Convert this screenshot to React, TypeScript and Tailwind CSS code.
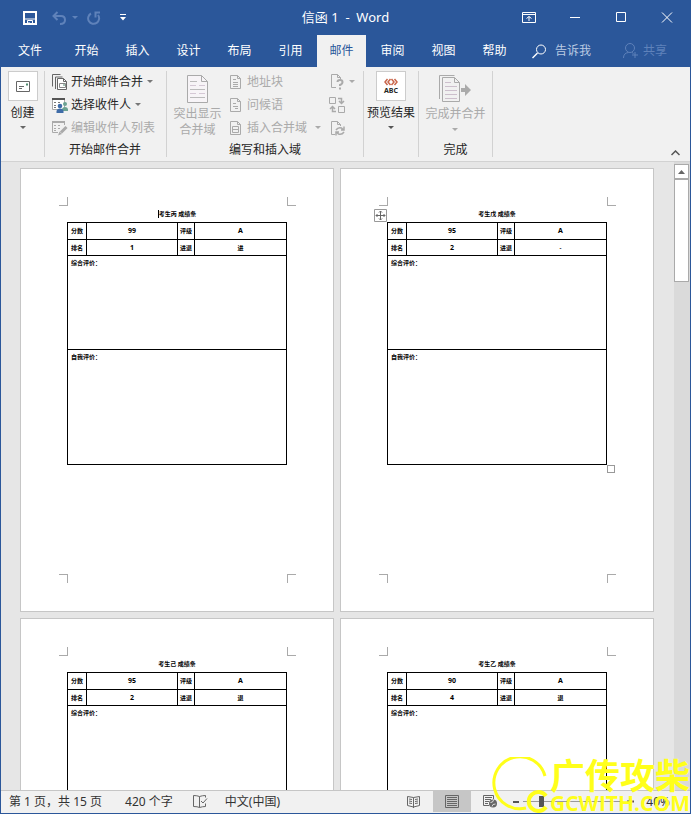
import { ReactNode } from "react";

type Slip = {
  name: string;
  score: string;
  rank: string;
  grade: string;
  trend: string;
  cursor?: boolean;
  handles?: boolean;
};

const slips: Slip[] = [
  { name: "考生丙", score: "99", rank: "1", grade: "A", trend: "进", cursor: true },
  { name: "考生戊", score: "95", rank: "2", grade: "A", trend: "-", handles: true },
  { name: "考生己", score: "95", rank: "2", grade: "A", trend: "退" },
  { name: "考生乙", score: "90", rank: "4", grade: "A", trend: "退" },
];

const tabs = ["开始", "插入", "设计", "布局", "引用", "邮件", "审阅", "视图", "帮助"];

const Caret = ({ className = "" }: { className?: string }) => (
  <svg width="6" height="3" viewBox="0 0 6 3" className={className} fill="currentColor">
    <path d="M0 0h6L3 3z" />
  </svg>
);

// Sheet of paper with a folded corner, shared by the small ribbon icons.
const Doc = ({ children }: { children?: ReactNode }) => (
  <svg width="15" height="16" viewBox="0 0 15 16" fill="none" stroke="currentColor">
    <path d="M1.500 1.500h7l3 3v10h-10z" />
    <path d="M8.500 1.500v3h3" />
    {children}
  </svg>
);

const MergeIcon = () => (
  <svg width="16" height="16" viewBox="0 0 16 16" fill="none" stroke="#666">
    <path d="M.5 12.500V.5h8M3.500 15V3h7" />
    <path d="M5.500 15.500v-11h6l3 3v8z" fill="#fff" />
    <path d="M11.500 4.500v3h3" />
    <path d="M7.500 9.500h6v4h-6z" fill="#fff" stroke="#888" />
    <path d="M11 11h2" stroke="#4f8a6e" />
  </svg>
);

const RecipientsIcon = () => (
  <svg width="16" height="16" viewBox="0 0 16 16" fill="none">
    <path d="M.5 1.500h12v11H.5z" fill="#fff" stroke="#aaa" />
    <path d="M0 2h13" stroke="#555" strokeWidth="2" />
    <path d="M2 5.500h2M6 5.500h2M2 8.500h2M2 10.500h2" stroke="#777" />
    <circle cx="13" cy="7" r="2" fill="#6ba292" />
    <path d="M10 14v-2q.5-2 3-2t3 2v2z" fill="#6ba292" />
    <circle cx="8" cy="9" r="2.300" fill="#3f6ca8" />
    <path d="M4.500 16v-2q.5-2.500 3.500-2.500t3.500 2.500v2z" fill="#3f6ca8" />
  </svg>
);

const EditListIcon = () => (
  <svg width="16" height="16" viewBox="0 0 16 16" fill="none" stroke="#aaa">
    <path d="M6 12.500H.5v-11h12V5" />
    <path d="M0 2h13" strokeWidth="2" />
    <path d="M2 5.500h2M6 5.500h2M2 8.500h2M6 8.500h2M2 10.500h2" />
    <path d="M14.500 7l-5.500 5.500" strokeWidth="3" />
    <path d="M7.500 11.500L6 15.500l4-1.500z" fill="#aaa" stroke="none" />
  </svg>
);

const HighlightIcon = () => (
  <svg width="22" height="28" viewBox="0 0 22 28" fill="none" stroke="#aaa">
    <path d="M.5.5h14l6 6v21H.5z" fill="#f7f4f7" />
    <path d="M14.500.5v6h6" />
    <path d="M3 6.500h7M3 14.500h15M3 22.500h15" stroke="#bbb" />
    <path d="M3 10.500h6M12 10.500h6M3 18.500h6M12 18.500h6" stroke="#d5c8d5" />
  </svg>
);

const FinishIcon = () => (
  <svg width="32" height="28" viewBox="0 0 32 28" fill="none" stroke="#aaa">
    <path d="M.5 24V.5h15M3.500 2.500h12l5 5v19h-17z" />
    <path d="M15.500 2.500v5h5" />
    <path d="M6 7.500h6M6 11.500h12M6 15.500h12M6 19.500h12M6 23.500h12" stroke="#ccbfcc" />
    <path d="M22 13h4V9l6 6-6 6v-4h-4z" fill="#aaa" stroke="none" />
  </svg>
);

const SmallButton = ({ icon, label, caret, off }: { icon: ReactNode; label: string; caret?: boolean; off?: boolean }) => (
  <button className={`flex h-[23px] items-center gap-[3px] whitespace-nowrap ${off ? "text-[#aaa]" : "text-[#262626]"}`}>
    {icon}
    <span>{label}</span>
    {caret && <Caret className="ml-px text-[#777]" />}
  </button>
);

const Divider = () => <div className="my-1 w-px shrink-0 bg-[#d2d2d2]" />;

const WindowButton = ({ label, children }: { label: string; children: ReactNode }) => (
  <button aria-label={label} className="flex h-full w-[46px] items-center justify-center">
    <svg width="14" height="11" viewBox="0 0 14 11" fill="none" stroke="#fff">
      {children}
    </svg>
  </button>
);

const TitleBar = () => (
  <header className="relative flex h-[34px] shrink-0 items-center justify-between text-white">
    <div className="flex items-center pl-[22px] pt-px">
      <button aria-label="保存">
        <svg width="14" height="14" viewBox="0 0 14 14" fill="none" stroke="#fff" strokeWidth="2">
          <path d="M1 1h12v12H1z" />
          <path d="M1 8h12" strokeWidth="1" />
          <path d="M4.500 13v-3.500h5V13" strokeWidth="1" />
          <path d="M6 11v3" strokeWidth="1" />
        </svg>
      </button>
      <button aria-label="撤消" className="ml-[15px] flex items-center gap-[6px] text-[#5f82ba]">
        <svg width="14" height="14" viewBox="0 0 14 14" fill="none" stroke="currentColor" strokeWidth="2">
          <path d="M5.500 1L1.500 5l4 4M2 5h7q4 0 4 4t-5 4" />
        </svg>
        <Caret />
      </button>
      <button aria-label="重复" className="ml-[9px] text-[#5f82ba]">
        <svg width="14" height="14" viewBox="0 0 14 14" fill="none" stroke="currentColor" strokeWidth="2">
          <path d="M4 2.500a5.500 5.500 0 1 0 7 1.500M13 1.500H8.500v5" />
        </svg>
      </button>
      <button aria-label="自定义" className="ml-[19px]">
        <svg width="6" height="7" viewBox="0 0 6 7" fill="#fff">
          <path d="M0 0h6v1H0zM0 3h6L3 6.500z" />
        </svg>
      </button>
    </div>
    <h1 className="absolute left-1/2 -translate-x-1/2 whitespace-pre text-[13px]">信函 1  -  Word</h1>
    <div className="flex h-full items-center">
      <WindowButton label="功能区显示选项">
        <path d="M.5.5h13v10H.5zM0 2.500h14M7 9V4.500M4.500 6.500L7 4.500l2.500 2" />
      </WindowButton>
      <WindowButton label="最小化">
        <path d="M2 5.500h10" />
      </WindowButton>
      <WindowButton label="最大化">
        <path d="M2.500.5h9v9h-9z" />
      </WindowButton>
      <WindowButton label="关闭">
        <path d="M2 .5l10 10M12 .5L2 10.500" />
      </WindowButton>
    </div>
  </header>
);

const TabBar = () => (
  <nav className="flex h-[33px] shrink-0 items-stretch pt-px text-white">
    <button className="mr-[2px] w-[58px]">文件</button>
    {tabs.map((tab) => (
      <button key={tab} className={tab === "邮件" ? "mx-px w-[49px] bg-[#f1f1f1] text-[#2b579a]" : "w-[51px]"}>
        {tab}
      </button>
    ))}
    <button className="ml-3 flex items-center gap-2 text-[#bccbe3]">
      <svg width="15" height="15" viewBox="0 0 15 15" fill="none" stroke="#fff">
        <circle cx="9" cy="5.500" r="4.500" />
        <path d="M5.500 9L.5 14" strokeWidth="1.500" />
      </svg>
      告诉我
    </button>
    <button className="ml-auto mr-[23px] flex items-center gap-1 text-[#5f82ba]">
      <svg width="16" height="16" viewBox="0 0 16 16" fill="none" stroke="currentColor">
        <circle cx="7" cy="5" r="4.500" />
        <path d="M.5 15q0-5 5-5.500M9 9.500l1.500 1M12 9v6M9 12h6" />
      </svg>
      共享
    </button>
  </nav>
);

const Ribbon = () => (
  <section className="flex h-[95px] shrink-0 border-b border-[#d2d2d2] bg-[#f1f1f1] text-[#262626]">
    <button className="flex w-[43px] flex-col items-center pt-1">
      <span className="flex h-[30px] w-[30px] items-center justify-center border border-[#ccc] bg-white">
        <svg width="14" height="11" viewBox="0 0 14 11" fill="none" stroke="#666">
          <path d="M.5.5h13v10H.5zM3 5.500h5M3 7.500h3" />
          <path d="M10 3.500h2" stroke="#4f8a6e" strokeWidth="2" />
        </svg>
      </span>
      <span className="mt-[3px]">创建</span>
      <Caret className="mt-1 text-[#666]" />
    </button>
    <Divider />
    <div className="flex w-[121px] flex-col pl-[7px] pt-[3px]">
      <SmallButton icon={<MergeIcon />} label="开始邮件合并" caret />
      <SmallButton icon={<RecipientsIcon />} label="选择收件人" caret />
      <SmallButton icon={<EditListIcon />} label="编辑收件人列表" off />
      <p className="mr-2 mt-[2px] text-center">开始邮件合并</p>
    </div>
    <Divider />
    <div className="flex w-[196px] flex-col">
      <div className="flex h-[74px]">
        <button className="flex w-[61px] flex-col items-center pt-2 leading-4 text-[#aaa]">
          <HighlightIcon />
          <span className="mt-[3px]">突出显示<br />合并域</span>
        </button>
        <div className="flex flex-col pl-px pt-[3px]">
          <SmallButton icon={<Doc><path d="M4 5.500h3M4 8.500h5M4 10.500h5M4 12.500h5" /></Doc>} label="地址块" off />
          <SmallButton icon={<Doc><path d="M4 6.500h3M4 9.500h5M6 11.500h3" /></Doc>} label="问候语" off />
          <div className="flex items-center gap-2 text-[#aaa]">
            <SmallButton icon={<Doc><path d="M3.500 6.500h6v6h-6zM3.500 9.500h6" /></Doc>} label="插入合并域" off />
            <Caret />
          </div>
        </div>
        <div className="flex flex-col pl-2 pt-[3px] text-[#aaa]">
          <button aria-label="规则" className="flex h-[23px] items-center gap-1">
            <svg width="16" height="17" viewBox="0 0 16 17" fill="none" stroke="currentColor">
              <path d="M7 14.500H2.500v-13h6l3 3V6M8.500 1.500v3h3" />
              <path d="M8.500 9q0-2 2.500-2t2.500 2-2.500 3v1M11 14.500v2" strokeWidth="2" />
            </svg>
            <Caret />
          </button>
          <button aria-label="匹配域" className="flex h-[23px] items-center">
            <svg width="16" height="16" viewBox="0 0 16 16" fill="none" stroke="currentColor">
              <path d="M.5.500h6v6h-6zM9.500 9.500h6v6h-6z" />
              <path d="M9 1.500h3.500V6M10 4l2.500 2.500L15 4M7 14.500H3.500V10M1 12l2.500-2.500L6 12" strokeWidth="1.500" />
            </svg>
          </button>
          <button aria-label="更新标签" className="flex h-[23px] items-center">
            <svg width="17" height="16" viewBox="0 0 17 16" fill="none" stroke="currentColor">
              <path d="M6 14.500H2.500v-13h6l3 3V6M8.500 1.500v3h3" />
              <path d="M7 10q2-3 5.500-2l1.500 1.500M15 6.500v3.500h-3M15 12q-2 3-5.500 2L8 12.500M7 15.500V12h3" strokeWidth="1.500" />
            </svg>
          </button>
        </div>
      </div>
      <p className="text-center">编写和插入域</p>
    </div>
    <Divider />
    <button className="flex w-[54px] flex-col items-center whitespace-nowrap pt-1">
      <span className="flex h-[30px] w-[30px] flex-col items-center justify-center border border-[#ccc] bg-white">
        <svg width="14" height="8" viewBox="0 0 14 8" fill="none" stroke="#c9674c" strokeWidth="1.500">
          <path d="M3.500 1l-2.500 3 2.500 3M6.500 1L4 4l2.500 3M7.500 1L10 4 7.500 7M10.500 1L13 4l-2.500 3" />
        </svg>
        <span className="text-[7px] font-bold leading-[9px]">ABC</span>
      </span>
      <span className="mt-[3px]">预览结果</span>
      <Caret className="mt-1 text-[#555]" />
    </button>
    <Divider />
    <div className="flex w-[73px] flex-col items-center">
      <button className="flex h-[74px] flex-col items-center whitespace-nowrap pt-2 text-[#aaa]">
        <FinishIcon />
        <span className="mt-[2px]">完成并合并</span>
        <Caret className="mt-[5px]" />
      </button>
      <p>完成</p>
    </div>
    <Divider />
    <button aria-label="折叠功能区" className="ml-auto mr-[10px] self-end pb-[5px]">
      <svg width="9" height="6" viewBox="0 0 9 6" fill="none" stroke="#555" strokeWidth="1.500">
        <path d="M.5 5l4-4 4 4" />
      </svg>
    </button>
  </section>
);

const CropMarks = ({ bottom }: { bottom?: boolean }) => (
  <div className="flex justify-between pl-[38px] pr-[37px]">
    <span className={`size-[9px] border-r border-[#aaa] ${bottom ? "border-t" : "border-b"}`} />
    <span className={`size-[9px] border-l border-[#aaa] ${bottom ? "border-t" : "border-b"}`} />
  </div>
);

const Page = ({ slip }: { slip: Slip }) => (
  <article className="flex h-[444px] w-[314px] flex-col border border-[#c6c6c6] bg-white pb-7 pt-7 text-[6px] font-bold leading-[8px] text-black">
    <CropMarks />
    <h2 className="mt-1 h-3 text-center">
      <span className={slip.cursor ? "border-l border-black" : ""}>{slip.name} 成绩条</span>
    </h2>
    <div className="relative mx-[46px]">
      {slip.handles && (
        <svg width="13" height="13" viewBox="0 0 13 13" fill="none" stroke="#666" className="absolute -left-[13px] -top-[13px]">
          <path d="M.5.5h12v12H.5z" fill="#fff" stroke="#999" />
          <path d="M6.500 2v9M2 6.500h9M5 3.500l1.500-1.500L8 3.500M5 9.500L6.500 11 8 9.500M3.500 5L2 6.500 3.500 8M9.500 5L11 6.500 9.500 8" />
        </svg>
      )}
      <table className="w-full table-fixed border-collapse border border-black text-center [&_td]:border [&_td]:border-black [&_td]:p-0 [&_th]:border [&_th]:border-black [&_th]:p-0">
        <colgroup>
          <col className="w-[19px]" />
          <col className="w-[91px]" />
          <col className="w-[17px]" />
          <col />
        </colgroup>
        <tbody>
          <tr className="h-[17px]">
            <th>分数</th>
            <td className="text-[7px]">{slip.score}</td>
            <th>评级</th>
            <td className="text-[7px]">{slip.grade}</td>
          </tr>
          <tr className="h-4">
            <th>排名</th>
            <td className="text-[7px]">{slip.rank}</td>
            <th>进退</th>
            <td>{slip.trend}</td>
          </tr>
          <tr className="h-[94px] text-left align-top">
            <td colSpan={4}><p className="pl-[3px] pt-[3px]">综合评价：</p></td>
          </tr>
          <tr className="h-[115px] text-left align-top">
            <td colSpan={4}><p className="pl-[3px] pt-[3px]">自我评价：</p></td>
          </tr>
        </tbody>
      </table>
      {slip.handles && <span className="absolute -bottom-2 -right-2 size-2 border border-[#999] bg-white" />}
    </div>
    <div className="mt-auto">
      <CropMarks bottom />
    </div>
  </article>
);

const ScrollBar = () => (
  <div className="flex w-4 shrink-0 flex-col bg-[#dadada] pr-px pt-[2px]">
    <button aria-label="向上滚动" className="flex h-[15px] shrink-0 items-center justify-center border border-[#aaa] bg-white">
      <svg width="7" height="4" viewBox="0 0 7 4" fill="#666">
        <path d="M0 4h7L3.500 0z" />
      </svg>
    </button>
    <div className="h-[103px] border border-[#aaa] bg-white" />
  </div>
);

const StatusBar = () => (
  <footer className="flex h-[23px] shrink-0 items-center border-t border-[#c6c6c6] bg-[#f1f1f1] pb-px pl-2 text-[#333]">
    <span className="whitespace-nowrap">第 1 页，共 15 页</span>
    <span className="ml-[23px] whitespace-nowrap">420 个字</span>
    <button aria-label="校对" className="ml-5">
      <svg width="15" height="13" viewBox="0 0 15 13" fill="none" stroke="#666">
        <path d="M6.500 1.500Q4 .5.500.500v11q4 0 6 1zM6.500 1.500q3-1 6-1v2M6.500 12.500q3-1 6-1v-3M8 6l2 2 4-4.500" />
      </svg>
    </button>
    <span className="ml-[17px] whitespace-nowrap">中文(中国)</span>
    <div className="ml-auto flex h-full items-center">
      <button aria-label="阅读视图" className="flex h-full w-[39px] items-center justify-center">
        <svg width="13" height="12" viewBox="0 0 13 12" fill="none" stroke="#666">
          <path d="M6.500 1.500L.5.500v9l6 1.500 6-1.500v-9zM6.500 1.500V12M2 3l3 .5M2 5l3 .5M2 7l3 .5M11 3l-3 .5M11 5l-3 .5M11 7l-3 .5" />
        </svg>
      </button>
      <button aria-label="页面视图" className="flex h-full w-[38px] items-center justify-center bg-[#c6c6c6]">
        <svg width="14" height="13" viewBox="0 0 14 13" fill="none" stroke="#666">
          <path d="M.5.5h13v12H.5zM2 2.500h10M2 4.500h10M2 6.500h10M2 8.500h10M2 10.500h10" />
        </svg>
      </button>
      <button aria-label="Web 版式视图" className="flex h-full w-[38px] items-center justify-center">
        <svg width="14" height="13" viewBox="0 0 14 13" fill="none" stroke="#666">
          <path d="M6 10.500H.5V.5h10V4M2 2.500h7M2 4.500h6M2 6.500h4M2 8.500h3" />
          <circle cx="10" cy="8.500" r="4" fill="#666" stroke="none" />
          <path d="M7.500 7.500l2-.5 1-2M9 11.500l1-2 2.500-.5" stroke="#ddd" />
        </svg>
      </button>
      <button aria-label="缩小" className="ml-1 h-[2px] w-[6px] bg-[#555]" />
      <input
        type="range"
        aria-label="显示比例"
        min="0"
        max="100"
        defaultValue="17"
        className="mx-1 h-[11px] w-[100px] appearance-none bg-[linear-gradient(#999,#999)] bg-[length:100%_1px] bg-center bg-no-repeat [&::-webkit-slider-thumb]:h-[11px] [&::-webkit-slider-thumb]:w-[5px] [&::-webkit-slider-thumb]:appearance-none [&::-webkit-slider-thumb]:bg-[#555]"
      />
      <button aria-label="放大">
        <svg width="7" height="7" viewBox="0 0 7 7" stroke="#555" strokeWidth="2">
          <path d="M0 3.500h7M3.500 0v7" />
        </svg>
      </button>
      <span className="ml-3 mr-5">40%</span>
    </div>
  </footer>
);

// Site stamp laid over the lower right corner of the window.
const Watermark = () => (
  <div className="pointer-events-none absolute bottom-0 right-0 flex items-end whitespace-nowrap text-[#ffff1a]">
    <svg width="58" height="56" viewBox="0 0 58 56" fill="none" stroke="currentColor" strokeWidth="3">
      <path d="M53 19A26 26 0 1 0 34 51" />
      <path d="M54 39A9.500 9.500 0 1 0 54 50" strokeWidth="4" />
    </svg>
    <div className="font-bold">
      <p className="text-[35px] leading-[34px]">广传攻柴</p>
      <p className="font-['Open_Sans'] text-[21px] leading-[20px]">GCWITH.COM</p>
    </div>
  </div>
);

const App = () => {
  return (
    <div className="relative flex h-screen flex-col overflow-hidden border border-t-0 border-[#2b579a] bg-[#2b579a] font-['Noto_Sans','Noto_Sans_CJK_SC',sans-serif] text-[12px] leading-[18px]">
      <TitleBar />
      <TabBar />
      <Ribbon />
      <div className="flex min-h-0 flex-1 bg-[#e6e6e6]">
        <main className="flex flex-1 flex-wrap content-start justify-center gap-[6px] overflow-hidden pr-px pt-[6px]">
          {slips.map((slip) => (
            <Page key={slip.name} slip={slip} />
          ))}
        </main>
        <ScrollBar />
      </div>
      <StatusBar />
      <Watermark />
    </div>
  );
};

export default App;
